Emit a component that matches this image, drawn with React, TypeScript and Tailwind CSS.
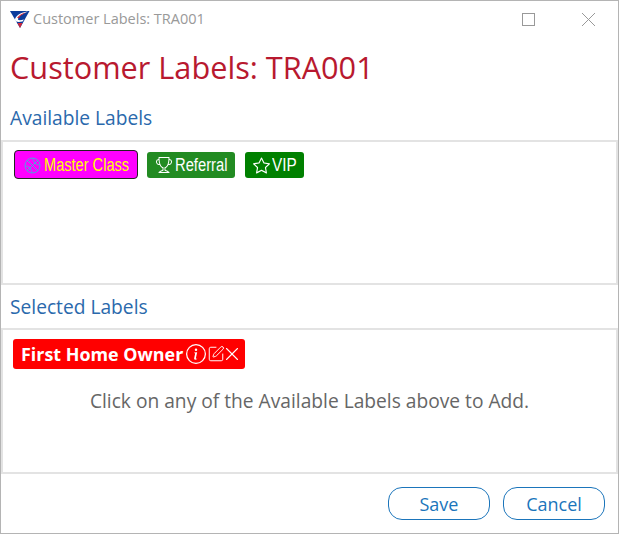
import { SquarePen, X } from "lucide-react";
import { BsInfoCircle, BsStar, BsTrophy } from "react-icons/bs";

function Logo() {
  return (
    <svg width="20" height="17" viewBox="0 0 20 17">
      <path d="M0 0H19.500L10 17Z" fill="#0b3c9c" />
      <path d="M5 8C7 3 13 1 18 0.500C12 3 9 5 8 8C8 9.500 10 9.500 14 8.500L12.500 10.500C8 11.500 4.500 11 5 8Z" fill="#ffffff" />
      <path d="M7 7C9 4 12 2.500 16 1.500C12 3.500 10 5 9 7Z" fill="#d0263a" />
      <path d="M7.500 12H12.500L10 17Z" fill="#d0263a" />
    </svg>
  );
}

// basketball glyph on the Master Class chip
function Ball() {
  return (
    <svg className="h-[17px] w-[17px] shrink-0 text-[#4ea3e0]" viewBox="0 0 17 17" fill="none" stroke="currentColor" strokeWidth="1">
      <circle cx="8.500" cy="8.500" r="7.500" />
      <path d="M3.200 3.200L13.800 13.800M13.800 3.200L3.200 13.800" />
      <path d="M9 1.200C9 5 12 8 15.800 8M1.200 9C5 9 8 12 8 15.800" />
    </svg>
  );
}

function TitleBar() {
  return (
    <div className="flex h-[36px] items-center pl-[9px]">
      <Logo />
      <span className="ml-[3px] text-[14.500px] text-[#999999]">Customer Labels: TRA001</span>
      <div className="ml-auto flex items-center">
        <div className="h-[13px] w-[13px] border border-[#999999]" />
        <svg className="ml-[47px] mr-[23px] h-[13px] w-[13px] text-[#999999]" viewBox="0 0 13 13" fill="none" stroke="currentColor">
          <path d="M0 0L13 13M13 0L0 13" />
        </svg>
      </div>
    </div>
  );
}

export default function App() {
  return (
    <div className="flex h-[534px] w-[619px] flex-col overflow-hidden border-x border-y border-[#b4b4b4] bg-white font-['Open_Sans',sans-serif]">
      <TitleBar />
      <h1 className="mt-[8px] pl-[9px] text-[30.700px] leading-[44px] text-[#b8192f]">Customer Labels: TRA001</h1>

      <div className="mt-[16px] pl-[9px] text-[19.200px] leading-[26px] text-[#2a69ac]">Available Labels</div>
      <div className="mt-[9px] flex h-[145px] items-start border-2 border-[#e3e3e3] px-[11px] py-[8px] font-['Liberation_Sans',sans-serif]">
        <div className="flex h-[29px] w-[124px] items-center gap-[3px] rounded-[4px] border border-[#222222] bg-[#ff00ff] pl-[9px] pt-[1px] text-[18px] text-[#ffff00]">
          <Ball />
          <span className="origin-left scale-x-[0.81] whitespace-nowrap">Master Class</span>
        </div>
        <div className="ml-[9px] mt-[2px] flex h-[26px] w-[88px] items-center gap-[3px] rounded-[3px] bg-[#228b22] pl-[9px] text-[18px] text-white">
          <BsTrophy className="h-[16px] w-[16px] shrink-0" />
          <span className="origin-left scale-x-[0.82] whitespace-nowrap">Referral</span>
        </div>
        <div className="ml-[10px] mt-[2px] flex h-[26px] w-[59px] items-center gap-[2px] rounded-[3px] bg-[#008000] pl-[8px] text-[18px] text-white">
          <BsStar className="h-[17px] w-[17px] shrink-0" />
          <span className="origin-left scale-x-[0.85] whitespace-nowrap">VIP</span>
        </div>
      </div>

      <div className="mt-[9px] pl-[9px] text-[19.200px] leading-[26px] text-[#2a69ac]">Selected Labels</div>
      <div className="mt-[8px] flex h-[146px] flex-col border-2 border-[#e3e3e3] px-[10px] py-[9px]">
        <div className="flex h-[30px] w-[232px] items-center rounded-[3px] bg-[#ff0000] pl-[8px] text-[17.900px] font-bold text-white">
          <span className="whitespace-nowrap">First Home Owner</span>
          <BsInfoCircle className="ml-[3px] h-[20px] w-[20px] shrink-0" />
          <SquarePen className="ml-[1px] h-[18px] w-[18px] shrink-0" strokeWidth={1.3} />
          <X className="ml-[-4px] h-[22px] w-[22px] shrink-0" strokeWidth={1.2} />
        </div>
        <div className="mt-[19px] text-center text-[19.200px] leading-[26px] text-[#666666]">Click on any of the Available Labels above to Add.</div>
      </div>

      <div className="mt-[13px] flex justify-end gap-[13px] pr-[13px]">
        <button className="h-[33px] w-[102px] rounded-[14px] border border-[#1b75bb] pt-[1px] text-[18px] text-[#1b75bb]">Save</button>
        <button className="h-[33px] w-[102px] rounded-[14px] border border-[#1b75bb] pt-[1px] text-[18px] text-[#1b75bb]">Cancel</button>
      </div>
    </div>
  );
}
